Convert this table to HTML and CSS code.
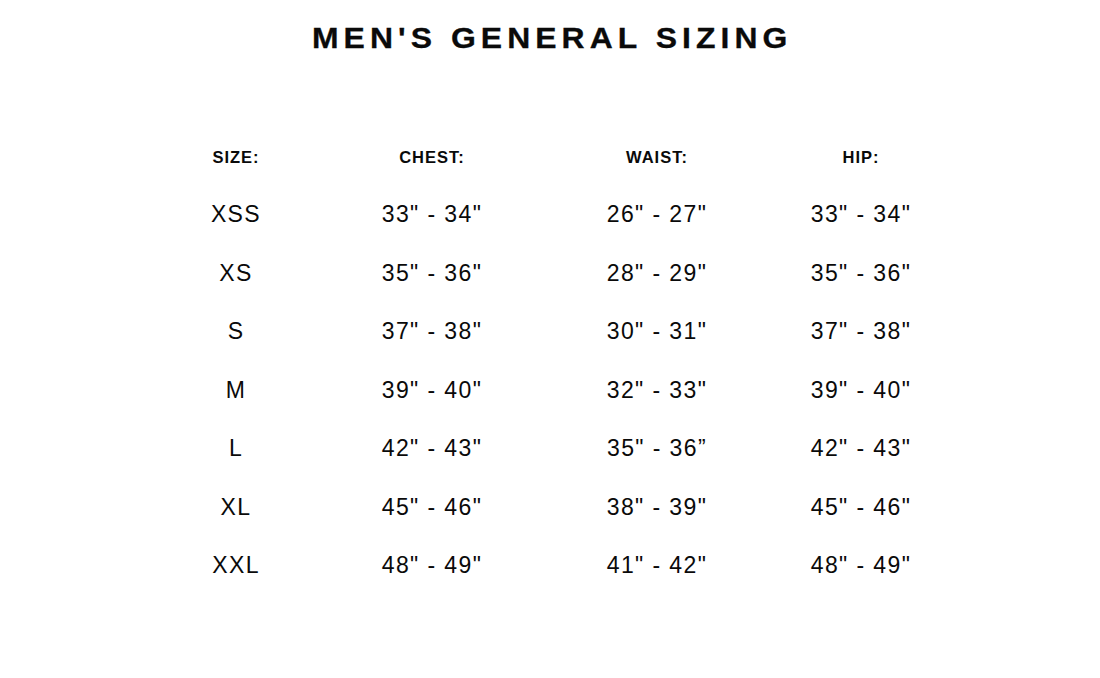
FILE: index.html
```html
<!DOCTYPE html>
<html>
<head>
<meta charset="utf-8">
<link rel="stylesheet" href="styles.css">
</head>
<body>
<div class="page">
  <h1 class="title">MEN'S GENERAL SIZING</h1>
  <div class="chart">
    <div class="cell head">SIZE:</div><div class="cell head">CHEST:</div><div class="cell head">WAIST:</div><div class="cell head">HIP:</div>
    <div class="cell">XSS</div><div class="cell">33" - 34"</div><div class="cell">26" - 27"</div><div class="cell">33" - 34"</div>
    <div class="cell">XS</div><div class="cell">35" - 36"</div><div class="cell">28" - 29"</div><div class="cell">35" - 36"</div>
    <div class="cell">S</div><div class="cell">37" - 38"</div><div class="cell">30" - 31"</div><div class="cell">37" - 38"</div>
    <div class="cell">M</div><div class="cell">39" - 40"</div><div class="cell">32" - 33"</div><div class="cell">39" - 40"</div>
    <div class="cell">L</div><div class="cell">42" - 43"</div><div class="cell">35" - 36”</div><div class="cell">42" - 43"</div>
    <div class="cell">XL</div><div class="cell">45" - 46"</div><div class="cell">38" - 39"</div><div class="cell">45" - 46"</div>
    <div class="cell">XXL</div><div class="cell">48" - 49"</div><div class="cell">41" - 42"</div><div class="cell">48" - 49"</div>
  </div>
</div>
</body>
</html>
```
FILE: styles.css
```css
html, body {
  margin: 0;
  padding: 0;
  background: #ffffff;
}
body {
  font-family: "Liberation Sans", Arial, sans-serif;
  color: #0a0a0a;
}
.page {
  width: 1100px;
  height: 678px;
  overflow: hidden;
}
.title {
  margin: 21px 0 0 0;
  font-size: 29px;
  line-height: 34px;
  font-weight: 700;
  letter-spacing: 4.6px;
  text-align: center;
  padding-left: 4px;
  transform: scaleX(1.1);
  -webkit-text-stroke: 0.3px #0a0a0a;
}
.chart {
  margin: 74px 0 0 136px;
  display: grid;
  grid-template-columns: 200px 192px 258px 150px;
  grid-template-rows: 56px;
  grid-auto-rows: 58.5px;
  align-items: center;
}
.cell {
  text-align: center;
  font-size: 23px;
  letter-spacing: 1.4px;
  line-height: 28px;
}
.head {
  font-size: 16.5px;
  font-weight: 700;
  letter-spacing: 1px;
  line-height: 20px;
}
```
